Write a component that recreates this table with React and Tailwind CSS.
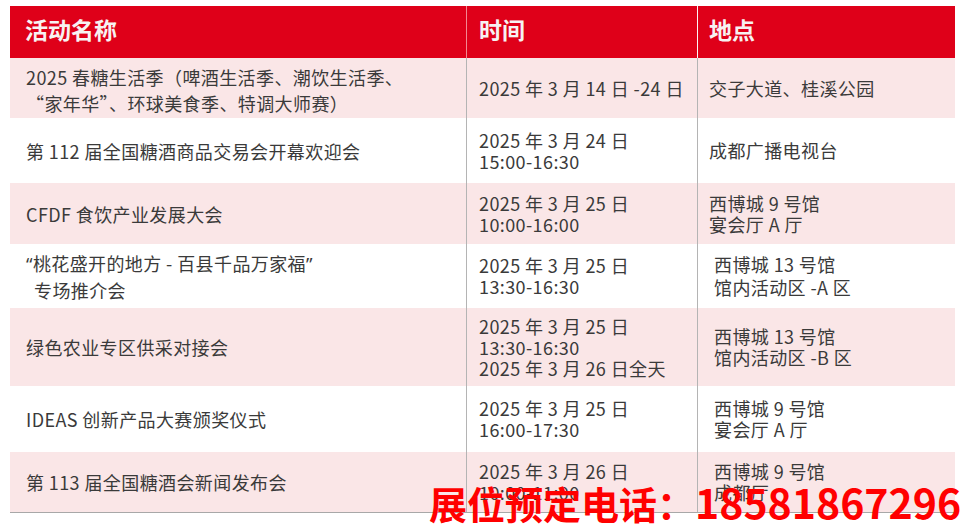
import React from 'react';

const rows = [
    {
        h: 'h-[60px]', pink: true, namePad: 'pt-[3px]',
        name: <>2025 春糖生活季（啤酒生活季、潮饮生活季、<br />“家年华”、环球美食季、特调大师赛）</>,
        time: ['2025 年 3 月 14 日 -24 日'],
        place: ['交子大道、桂溪公园'],
    },
    {
        h: 'h-[65px]', pink: false,
        name: <>第 112 届全国糖酒商品交易会开幕欢迎会</>,
        time: ['2025 年 3 月 24 日', '15:00-16:30'],
        place: ['成都广播电视台'],
    },
    {
        h: 'h-[61px]', pink: true,
        name: <>CFDF 食饮产业发展大会</>,
        time: ['2025 年 3 月 25 日', '10:00-16:00'],
        place: ['西博城 9 号馆', '宴会厅 A 厅'],
    },
    {
        h: 'h-[64px]', pink: false, shift: true, placeLeading: 'leading-[23px]',
        name: <><span className="font-['Noto_Sans',sans-serif]">“</span>桃花盛开的地方 - 百县千品万家福<span className="font-['Noto_Sans',sans-serif]">”</span><br /><span className="pl-2">专场推介会</span></>,
        time: ['2025 年 3 月 25 日', '13:30-16:30'],
        place: ['西博城 13 号馆', '馆内活动区 -A 区'],
    },
    {
        h: 'h-[78px]', pink: true, shift: true,
        name: <>绿色农业专区供采对接会</>,
        time: ['2025 年 3 月 25 日', '13:30-16:30', '2025 年 3 月 26 日全天'],
        place: ['西博城 13 号馆', '馆内活动区 -B 区'],
    },
    {
        h: 'h-[66px]', pink: false, shift: true,
        name: <>IDEAS 创新产品大赛颁奖仪式</>,
        time: ['2025 年 3 月 25 日', '16:00-17:30'],
        place: ['西博城 9 号馆', '宴会厅 A 厅'],
    },
    {
        h: 'h-[60px]', pink: true, shift: true,
        name: <>第 113 届全国糖酒会新闻发布会</>,
        time: ['2025 年 3 月 26 日', '10:00-11:00'],
        place: ['西博城 9 号馆', '成都厅'],
    },
];

function App() {
    return (
        <div className="relative w-[968px] h-[526px] bg-white overflow-hidden font-['Noto_Sans_CJK_SC',sans-serif]">
            <div className="pt-[6px] pl-[10px]">
                <div className="w-[945px] border-b border-[#a8a8a8]">
                    {/* header */}
                    <div className="grid grid-cols-[456px_231px_258px] h-[52px] bg-[#df0019] text-[#f7f2f2] text-[23px] font-bold">
                        <div className="flex items-center pl-[15px] pb-[6px]">活动名称</div>
                        <div className="flex items-center pl-[12px] pb-[6px] border-l border-[#f28891]">时间</div>
                        <div className="flex items-center pl-[11px] pb-[6px] border-l border-[#fdf3f4]">地点</div>
                    </div>
                    {rows.map((r, i) => (
                        <div key={i} className={`grid grid-cols-[456px_231px_258px] ${r.h} ${r.pink ? 'bg-[#fae6e7]' : 'bg-white'} text-[18px] tracking-[0.4px] text-[#3a3a3a]`}>
                            <div className={`flex items-center pl-4 leading-[26px] ${r.namePad || ''}`}>
                                <div>{r.name}</div>
                            </div>
                            <div className="flex items-center pl-[12px] border-l border-[#b4b4b4] leading-[21px]">
                                <div>
                                    {r.time.map((t, j) => <div key={j}>{t}</div>)}
                                </div>
                            </div>
                            <div className={`flex items-center border-l border-[#b4b4b4] ${r.placeLeading || 'leading-[21px]'} ${r.shift ? 'pl-[16px]' : 'pl-[11px]'}`}>
                                <div>
                                    {r.place.map((t, j) => <div key={j}>{t}</div>)}
                                </div>
                            </div>
                        </div>
                    ))}
                </div>
            </div>
            <div className="absolute left-[429px] top-[481px] whitespace-nowrap leading-none font-bold text-[#ff0000] text-[38px]">
                展位预定电话：<span className="text-[41px]">18581867296</span>
            </div>
        </div>
    );
}

export default App;
